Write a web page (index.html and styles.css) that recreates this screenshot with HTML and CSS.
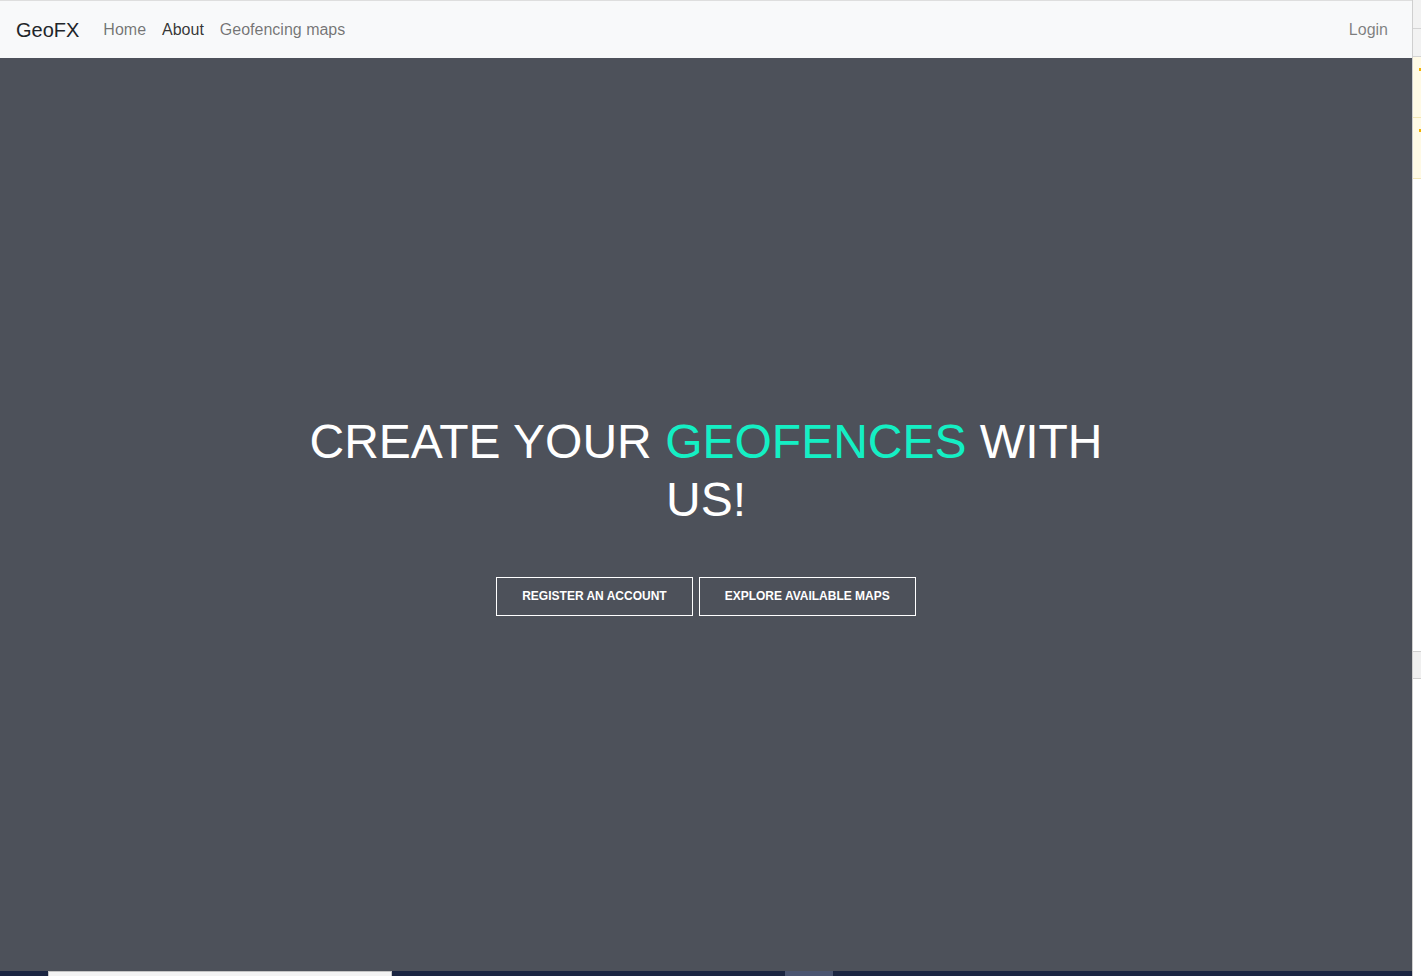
FILE: index.html
```html
<!DOCTYPE html>
<html lang="en">
<head>
<meta charset="utf-8">
<title>GeoFX</title>
<link rel="stylesheet" href="styles.css">
</head>
<body>
<div class="app">
  <div class="main">
    <div class="topline"></div>
    <nav class="navbar">
      <a class="brand" href="#">GeoFX</a>
      <ul class="nav">
        <li><a class="nav-link" href="#">Home</a></li>
        <li><a class="nav-link active" href="#">About</a></li>
        <li><a class="nav-link" href="#">Geofencing maps</a></li>
      </ul>
      <a class="nav-link login" href="#">Login</a>
    </nav>
    <section class="hero">
      <h1 class="title">CREATE YOUR <span class="accent">GEOFENCES</span> WITH US!</h1>
      <div class="actions">
        <a class="btn" href="#">Register an account</a>
        <a class="btn" href="#">Explore available maps</a>
      </div>
    </section>
    <div class="taskbar">
      <div class="tb-window"></div>
      <div class="tb-item"></div>
    </div>
  </div>
  <aside class="side">
    <div class="side-row"></div>
    <div class="side-row"></div>
    <div class="side-warn"><span class="mark"></span></div>
    <div class="side-warn"><span class="mark"></span></div>
    <div class="side-fill">
      <div class="side-box"></div>
    </div>
  </aside>
</div>
</body>
</html>
```
FILE: styles.css
```css
* { box-sizing: border-box; }
html, body { margin: 0; padding: 0; }
body {
  font-family: "Liberation Sans", Arial, sans-serif;
  background: #ffffff;
  overflow: hidden;
}
.app {
  display: grid;
  grid-template-columns: 1412px 9px;
  height: 976px;
}
.main {
  display: flex;
  flex-direction: column;
  height: 976px;
}
.topline { height: 1px; background: #dedede; }
.navbar {
  height: 57px;
  background: #f8f9fa;
  display: flex;
  align-items: center;
  padding: 0 16px;
}
.brand {
  font-size: 20px;
  color: #212529;
  text-decoration: none;
  margin-right: 16px;
  line-height: 30px;
}
.nav {
  list-style: none;
  margin: 0;
  padding: 0;
  display: flex;
}
.nav-link {
  display: block;
  padding: 8px;
  font-size: 16px;
  line-height: 24px;
  color: rgba(0, 0, 0, 0.55);
  text-decoration: none;
}
.nav-link.active { color: rgba(0, 0, 0, 0.8); }
.login { margin-left: auto; color: rgba(0, 0, 0, 0.5); }
.hero {
  flex: 1;
  background: #4d515a;
  display: flex;
  flex-direction: column;
  align-items: center;
  justify-content: center;
  text-align: center;
}
.title {
  margin: 0 0 49px;
  max-width: 840px;
  font-weight: 400;
  font-size: 48px;
  line-height: 57.6px;
  color: #ffffff;
}
.accent { color: #14efc4; }
.actions {
  display: flex;
  gap: 6px;
  justify-content: center;
}
.btn {
  display: block;
  border: 1px solid #ffffff;
  color: #ffffff;
  text-decoration: none;
  text-transform: uppercase;
  font-weight: 700;
  font-size: 12px;
  line-height: 15px;
  padding: 11px 25px 11px;
}
.taskbar {
  height: 5px;
  background: #1b2541;
  display: flex;
}
.tb-window {
  margin-left: 48px;
  width: 344px;
  background: #f3f3f3;
  border-top: 1px solid #c4c4c4;
  border-left: 1px solid #c4c4c4;
  border-right: 1px solid #c4c4c4;
}
.tb-item {
  margin-left: 393px;
  width: 48px;
  background: #4b5571;
}
.side {
  display: flex;
  flex-direction: column;
  border-left: 1px solid #cfcfcf;
  background: #ffffff;
}
.side-row {
  height: 28px;
  background: #f2f2f2;
  border-bottom: 1px solid #d4d4d4;
  flex: none;
}
.side-row:first-child { height: 29px; }
.side-warn {
  height: 61px;
  background: #fffae6;
  border-bottom: 1px solid #f3e7b5;
  flex: none;
  position: relative;
}
.mark {
  position: absolute;
  left: 6px;
  top: 11px;
  width: 3px;
  height: 3px;
  background: #f2b300;
}
.side-fill { flex: 1; padding-top: 472px; }
.side-box {
  height: 28px;
  background: #f0f0f0;
  border-top: 1px solid #cfcfcf;
  border-bottom: 1px solid #cfcfcf;
}
```
